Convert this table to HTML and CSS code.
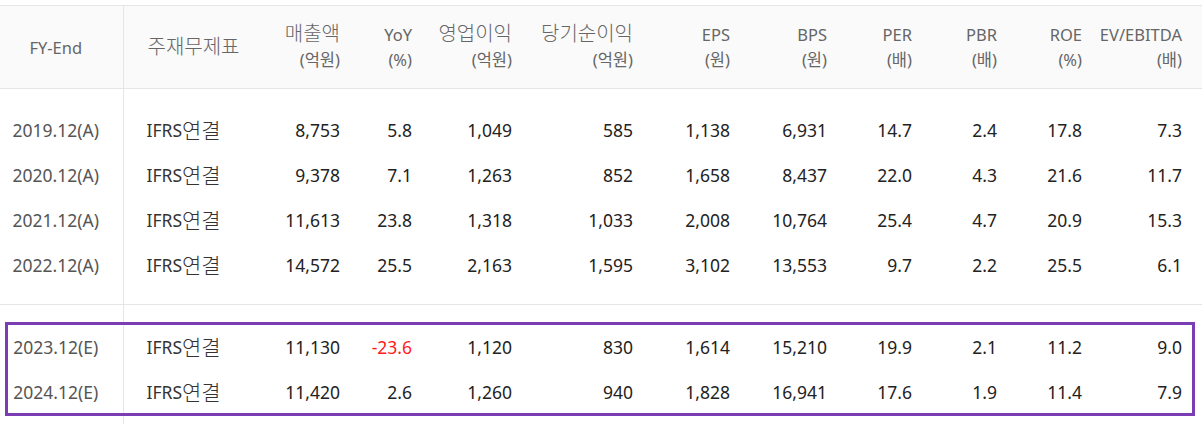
FILE: index.html
```html
<!DOCTYPE html>
<html lang="ko">
<head>
<meta charset="utf-8">
<title>재무 요약</title>
<link rel="stylesheet" href="styles.css">
</head>
<body>
<div class="wrap">
  <table class="fin">
    <colgroup>
      <col class="c0"><col class="c1"><col class="c2"><col class="c3"><col class="c4"><col class="c5">
      <col class="c6"><col class="c7"><col class="c8"><col class="c9"><col class="c10"><col class="c11">
    </colgroup>
    <thead>
      <tr>
        <th class="fy">FY-End</th>
        <th class="acc"><span class="ko">주재무제표</span></th>
        <th><span class="ko">매출액</span><br>(억원)</th>
        <th>YoY<br>(%)</th>
        <th><span class="ko">영업이익</span><br>(억원)</th>
        <th><span class="ko">당기순이익</span><br>(억원)</th>
        <th>EPS<br>(원)</th>
        <th>BPS<br>(원)</th>
        <th>PER<br>(배)</th>
        <th>PBR<br>(배)</th>
        <th>ROE<br>(%)</th>
        <th class="last">EV/EBITDA<br>(배)</th>
      </tr>
    </thead>
    <tbody class="actual">
      <tr>
        <td class="fy">2019.12(A)</td><td class="acc">IFRS<span class="ko">연결</span></td>
        <td>8,753</td><td>5.8</td><td>1,049</td><td>585</td><td>1,138</td><td>6,931</td><td>14.7</td><td>2.4</td><td>17.8</td><td class="last">7.3</td>
      </tr>
      <tr>
        <td class="fy">2020.12(A)</td><td class="acc">IFRS<span class="ko">연결</span></td>
        <td>9,378</td><td>7.1</td><td>1,263</td><td>852</td><td>1,658</td><td>8,437</td><td>22.0</td><td>4.3</td><td>21.6</td><td class="last">11.7</td>
      </tr>
      <tr>
        <td class="fy">2021.12(A)</td><td class="acc">IFRS<span class="ko">연결</span></td>
        <td>11,613</td><td>23.8</td><td>1,318</td><td>1,033</td><td>2,008</td><td>10,764</td><td>25.4</td><td>4.7</td><td>20.9</td><td class="last">15.3</td>
      </tr>
      <tr>
        <td class="fy">2022.12(A)</td><td class="acc">IFRS<span class="ko">연결</span></td>
        <td>14,572</td><td>25.5</td><td>2,163</td><td>1,595</td><td>3,102</td><td>13,553</td><td>9.7</td><td>2.2</td><td>25.5</td><td class="last">6.1</td>
      </tr>
    </tbody>
    <tbody class="estimate">
      <tr>
        <td class="fy">2023.12(E)</td><td class="acc">IFRS<span class="ko">연결</span></td>
        <td>11,130</td><td class="neg">-23.6</td><td>1,120</td><td>830</td><td>1,614</td><td>15,210</td><td>19.9</td><td>2.1</td><td>11.2</td><td class="last">9.0</td>
      </tr>
      <tr>
        <td class="fy">2024.12(E)</td><td class="acc">IFRS<span class="ko">연결</span></td>
        <td>11,420</td><td>2.6</td><td>1,260</td><td>940</td><td>1,828</td><td>16,941</td><td>17.6</td><td>1.9</td><td>11.4</td><td class="last">7.9</td>
      </tr>
    </tbody>
  </table>
  <div class="highlight"></div>
</div>
</body>
</html>
```

FILE: styles.css
```css
html, body {
  margin: 0;
  padding: 0;
  background: #ffffff;
}

body {
  font-family: "Noto Sans", "Noto Sans CJK KR", sans-serif;
  font-size: 17px;
  color: #222222;
  overflow: hidden;
}

.wrap {
  position: relative;
  margin-top: 5px;
  width: 1202px;
}

.fin {
  width: 1202px;
  border-collapse: collapse;
  table-layout: fixed;
  border-top: 1px solid #e6e6e6;
}

.c0 { width: 123px; }
.c1 { width: 127px; }
.c2 { width: 90px; }
.c3 { width: 72px; }
.c4 { width: 100px; }
.c5 { width: 121px; }
.c6 { width: 97px; }
.c7 { width: 97px; }
.c8 { width: 85px; }
.c9 { width: 85px; }
.c10 { width: 85px; }
.c11 { width: 120px; }

.fin th,
.fin td {
  padding: 0;
  text-align: right;
  vertical-align: middle;
  white-space: nowrap;
}

.fin th {
  height: 82px;
  background: #fafafa;
  color: #666666;
  font-weight: normal;
  font-size: 16.5px;
  line-height: 25px;
  border-bottom: 1px solid #e6e6e6;
}

.ko {
  font-family: "Noto Sans CJK KR", sans-serif;
  font-weight: 300;
  line-height: 1;
}

.fin th .ko {
  font-size: 20px;
}

.fin td {
  height: 45px;
  font-size: 17.5px;
  line-height: 45px;
}

.fin td .ko {
  font-size: 21px;
  vertical-align: -1px;
}

.fin .fy {
  text-align: center;
  padding-right: 11px;
  border-right: 1px solid #e6e6e6;
}

.fin td.fy {
  color: #555555;
}

.fin .acc {
  text-align: left;
  padding-left: 24px;
}

.fin td.acc {
  color: #333333;
  padding-left: 23px;
}

.fin .last {
  padding-right: 20px;
}

.fin .neg {
  color: #ff1a1a;
}

.actual tr:first-child td {
  padding-top: 19px;
}

.actual tr:last-child td {
  padding-bottom: 16px;
}

.estimate tr:first-child td {
  border-top: 1px solid #e6e6e6;
  padding-top: 20px;
}

.estimate tr:last-child td {
  padding-bottom: 10px;
}

.highlight {
  position: absolute;
  left: 5px;
  top: 317px;
  width: 1190px;
  height: 94px;
  box-sizing: border-box;
  border: 3px solid #7b3db3;
  pointer-events: none;
}
```
